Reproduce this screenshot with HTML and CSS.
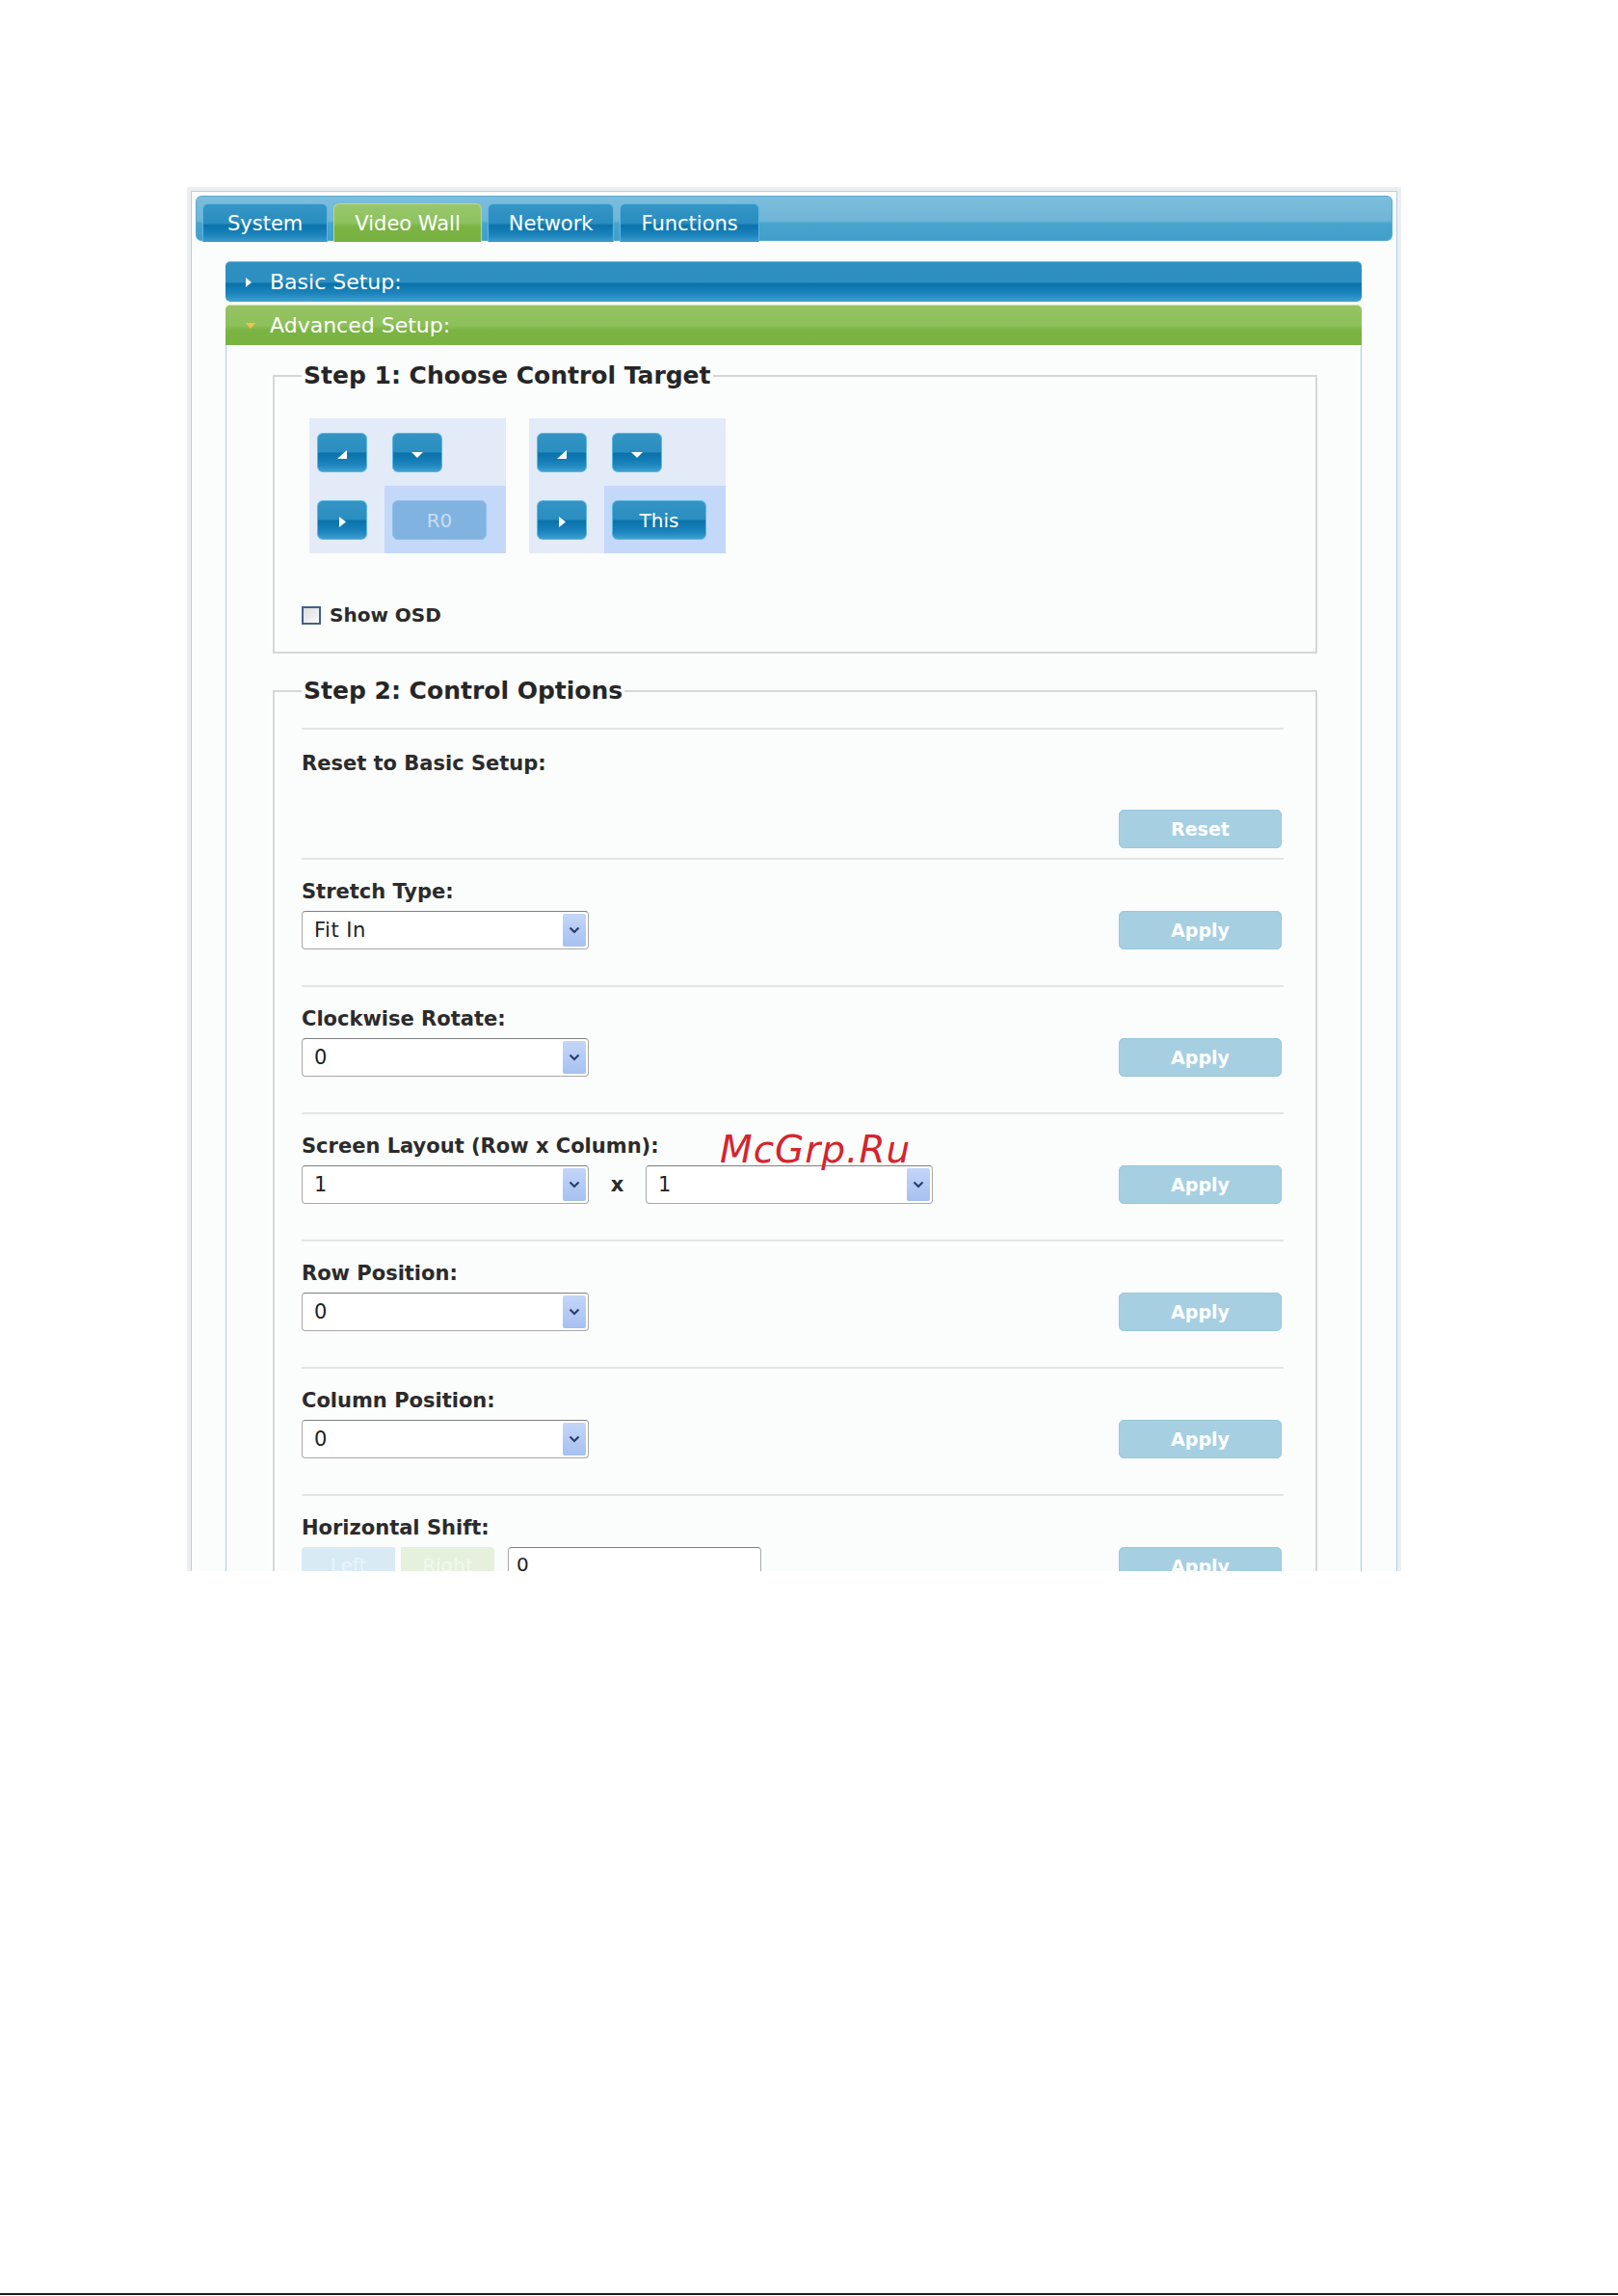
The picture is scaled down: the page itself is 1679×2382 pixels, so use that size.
FILE: index.html
```html
<!DOCTYPE html>
<html lang="en">
<head>
  <meta charset="UTF-8">
  <title>Video Wall</title>
  <link rel="stylesheet" href="styles.css">
</head>
<body>
  <div class="sheet">
    <div class="frame">
      <div class="frame-in">
        <div class="tabbar">
          <span class="tab">System</span>
          <span class="tab active">Video Wall</span>
          <span class="tab">Network</span>
          <span class="tab">Functions</span>
        </div>

        <div class="setup">
          <div class="bar basic"><span class="tri-r"></span>Basic Setup:</div>
          <div class="bar advanced"><span class="tri-d"></span>Advanced Setup:</div>

          <div class="panel">
            <fieldset class="step step1">
              <legend>Step 1: Choose Control Target</legend>
              <div class="targets">
                <div class="target">
                  <div class="cell"><button class="nav"><svg width="10" height="9" viewBox="0 0 10 9"><polygon points="0,9 10,9 10,0" fill="#fff"/></svg></button></div>
                  <div class="cell"><button class="nav"><svg width="12" height="6" viewBox="0 0 12 6"><polygon points="0,0 12,0 6,6" fill="#fff"/></svg></button></div>
                  <div class="cell"><button class="nav"><svg width="7" height="11" viewBox="0 0 7 11"><polygon points="0,0 7,5.5 0,11" fill="#fff"/></svg></button></div>
                  <div class="cell sel"><button class="pick off">R0</button></div>
                </div>
                <div class="target">
                  <div class="cell"><button class="nav"><svg width="10" height="9" viewBox="0 0 10 9"><polygon points="0,9 10,9 10,0" fill="#fff"/></svg></button></div>
                  <div class="cell"><button class="nav"><svg width="12" height="6" viewBox="0 0 12 6"><polygon points="0,0 12,0 6,6" fill="#fff"/></svg></button></div>
                  <div class="cell"><button class="nav"><svg width="7" height="11" viewBox="0 0 7 11"><polygon points="0,0 7,5.5 0,11" fill="#fff"/></svg></button></div>
                  <div class="cell sel"><button class="pick">This</button></div>
                </div>
              </div>
              <label class="osd"><span class="box"></span>Show OSD</label>
            </fieldset>

            <fieldset class="step step2">
              <legend>Step 2: Control Options</legend>

              <div class="opt reset">
                <div class="label">Reset to Basic Setup:</div>
                <div class="ctrl"><span></span><button class="apply">Reset</button></div>
              </div>

              <div class="opt">
                <div class="label">Stretch Type:</div>
                <div class="ctrl">
                  <div class="select"><span>Fit In</span><span class="caret"><svg width="12" height="8" viewBox="0 0 12 8"><polyline points="1.5,1.5 6,6 10.5,1.5" fill="none" stroke="#27406e" stroke-width="2.2"/></svg></span></div>
                  <button class="apply">Apply</button>
                </div>
              </div>

              <div class="opt">
                <div class="label">Clockwise Rotate:</div>
                <div class="ctrl">
                  <div class="select"><span>0</span><span class="caret"><svg width="12" height="8" viewBox="0 0 12 8"><polyline points="1.5,1.5 6,6 10.5,1.5" fill="none" stroke="#27406e" stroke-width="2.2"/></svg></span></div>
                  <button class="apply">Apply</button>
                </div>
              </div>

              <div class="opt">
                <div class="label">Screen Layout (Row x Column):</div>
                <div class="ctrl">
                  <div class="pair">
                    <div class="select"><span>1</span><span class="caret"><svg width="12" height="8" viewBox="0 0 12 8"><polyline points="1.5,1.5 6,6 10.5,1.5" fill="none" stroke="#27406e" stroke-width="2.2"/></svg></span></div>
                    <span class="times">x</span>
                    <div class="select"><span>1</span><span class="caret"><svg width="12" height="8" viewBox="0 0 12 8"><polyline points="1.5,1.5 6,6 10.5,1.5" fill="none" stroke="#27406e" stroke-width="2.2"/></svg></span></div>
                  </div>
                  <button class="apply">Apply</button>
                </div>
              </div>

              <div class="opt">
                <div class="label">Row Position:</div>
                <div class="ctrl">
                  <div class="select"><span>0</span><span class="caret"><svg width="12" height="8" viewBox="0 0 12 8"><polyline points="1.5,1.5 6,6 10.5,1.5" fill="none" stroke="#27406e" stroke-width="2.2"/></svg></span></div>
                  <button class="apply">Apply</button>
                </div>
              </div>

              <div class="opt">
                <div class="label">Column Position:</div>
                <div class="ctrl">
                  <div class="select"><span>0</span><span class="caret"><svg width="12" height="8" viewBox="0 0 12 8"><polyline points="1.5,1.5 6,6 10.5,1.5" fill="none" stroke="#27406e" stroke-width="2.2"/></svg></span></div>
                  <button class="apply">Apply</button>
                </div>
              </div>

              <div class="opt">
                <div class="label">Horizontal Shift:</div>
                <div class="ctrl">
                  <div class="pair">
                    <button class="shift left">Left</button>
                    <button class="shift right">Right</button>
                    <div class="field">0</div>
                  </div>
                  <button class="apply">Apply</button>
                </div>
              </div>
            </fieldset>
          </div>
        </div>
      </div>
    </div>
    <div class="watermark">McGrp.Ru</div>
  </div>
  <div class="edge"></div>
</body>
</html>
```

FILE: styles.css
```css
body {
  margin: 0;
  background: #fff;
  font-family: "DejaVu Sans", "Liberation Sans", sans-serif;
  color: #2b2b2b;
}
.sheet {
  position: relative;
  height: 2379px;
  padding: 194px 0 0 194px;
  box-sizing: border-box;
}
.edge {
  height: 2px;
  background: #1c1c1c;
}

/* outer frame, cut off at the bottom like the screenshot */
.frame {
  width: 1260px;
  height: 1436px;
  box-sizing: border-box;
  border: 4px solid #eceeef;
  border-bottom: 0;
  overflow: hidden;
}
.frame-in {
  height: 100%;
  box-sizing: border-box;
  border: 1px solid #b3d1ea;
  border-bottom: 0;
  background: #fbfcfc;
  padding: 4px 4px 0;
}

.tabbar {
  display: flex;
  gap: 6px;
  height: 47px;
  box-sizing: border-box;
  padding: 7px 0 0 6px;
  border-radius: 6px;
  background: linear-gradient(to bottom, #7cbddb 0%, #70b6d7 55%, #48a4cd 62%, #409fca 100%);
  border: 1px solid #5aaad3;
}
.tab {
  height: 40px;
  box-sizing: border-box;
  padding: 0 21px;
  display: flex;
  align-items: center;
  color: #fff;
  font-size: 21px;
  border: 1px solid #5bb7e4;
  border-bottom: 0;
  border-radius: 6px 6px 0 0;
  background: linear-gradient(to bottom, #3595c5 0%, #2a8dc0 50%, #0b73ac 56%, #1b83bb 80%, #3b9dcd 100%);
}
.tab:first-child {
  padding: 0 25px;
}
.tab.active {
  border-color: #b6dc8c;
  background: linear-gradient(to bottom, #98c76b 0%, #8dc15e 50%, #7bb444 58%, #78b140 100%);
}

.setup {
  margin: 21px 32px 0 31px;
}
.bar {
  height: 42px;
  box-sizing: border-box;
  display: flex;
  align-items: center;
  padding-left: 21px;
  color: #fff;
  font-size: 22px;
}
.bar.basic {
  border-radius: 5px;
  border-top: 1px solid #5cbbea;
  background: linear-gradient(to bottom, #2f90c0 0%, #2d8fbf 50%, #0a72ab 54%, #1d85bc 80%, #40a2d1 100%);
}
.bar.advanced {
  margin-top: 3px;
  border-radius: 5px 5px 0 0;
  border-top: 1px solid #c7e69e;
  background: linear-gradient(to bottom, #95c463 0%, #8dc05b 50%, #7cb443 62%, #7ab241 100%);
}
.tri-r {
  width: 0;
  height: 0;
  border-top: 5px solid transparent;
  border-bottom: 5px solid transparent;
  border-left: 6px solid #fff;
  margin-right: 19px;
}
.tri-d {
  width: 0;
  height: 0;
  border-left: 5px solid transparent;
  border-right: 5px solid transparent;
  border-top: 6px solid #f4c24c;
  margin-right: 15px;
}

.panel {
  border-left: 1px solid #a9cde8;
  border-right: 1px solid #a9cde8;
  background: #fbfcfc;
  padding-top: 17px;
  height: 1400px;
}

.step {
  margin: 0 45px 24px 48px;
  padding: 0 33px 26px 28px;
  border: 2px solid #d6d6d6;
}
.step legend {
  padding: 0 2px;
  font-size: 25px;
  line-height: 30px;
  font-weight: bold;
  color: #262626;
}

.targets {
  display: flex;
  gap: 24px;
  margin: 29px 0 0 8px;
}
.target {
  display: grid;
  grid-template-columns: 78px 126px;
  grid-template-rows: 70px 70px;
  background: #e3eaf8;
}
.cell {
  padding: 15px 0 0 8px;
}
.cell.sel {
  background: #c4d8f9;
}
.nav, .pick {
  height: 41px;
  box-sizing: border-box;
  border: 1px solid #5ab8e6;
  border-radius: 6px;
  background: linear-gradient(to bottom, #3394c4 0%, #2b8ec0 48%, #0a72ab 52%, #1a83bb 80%, #3d9fcf 100%);
  color: #fff;
  font-family: inherit;
  font-size: 20px;
  padding: 0;
  display: flex;
  align-items: center;
  justify-content: center;
}
.nav {
  width: 52px;
}
.nav svg {
  margin-top: 4px;
}
.pick {
  width: 98px;
}
.pick.off {
  background: #80b3df;
  border-color: #8fbde5;
  color: #c9dcf4;
}

.osd {
  display: flex;
  align-items: center;
  gap: 9px;
  height: 24px;
  margin-top: 52px;
  font-size: 20px;
  font-weight: bold;
  color: #2b2b2b;
}
.osd .box {
  width: 20px;
  height: 19px;
  box-sizing: border-box;
  border: 2px solid #40618d;
  background: linear-gradient(135deg, #dcdcdc, #fafafa);
}

.step2 legend + .opt {
  margin-top: 23px;
}
.opt {
  border-top: 2px solid #e4e4e4;
  padding: 21px 0 37px;
}
.opt.reset {
  padding: 23px 0 10px;
}
.label {
  font-size: 21px;
  line-height: 24px;
  font-weight: bold;
  color: #2b2b2b;
}
.ctrl {
  display: flex;
  justify-content: space-between;
  align-items: center;
  margin-top: 8px;
}
.reset .ctrl {
  margin-top: 36px;
}
.pair {
  display: flex;
  align-items: center;
}
.select {
  width: 298px;
  height: 40px;
  box-sizing: border-box;
  border: 1px solid #a8a8a8;
  border-top-color: #7f7f7f;
  border-radius: 4px;
  background: #fff;
  display: flex;
  align-items: center;
  padding-left: 12px;
  font-size: 21px;
  letter-spacing: 0.5px;
  color: #222;
}
.caret {
  margin-left: auto;
  margin-right: 2px;
  width: 24px;
  height: 34px;
  border-radius: 2px;
  background: linear-gradient(to bottom, #c4d6f8, #a6c0f0);
  display: flex;
  align-items: center;
  justify-content: center;
}
.times {
  width: 59px;
  text-align: center;
  font-size: 21px;
  font-weight: bold;
}
.apply {
  width: 169px;
  height: 40px;
  margin-right: 2px;
  border: 1px solid #9ac6db;
  border-radius: 5px;
  background: #a6cfe2;
  color: #fff;
  font-family: inherit;
  font-size: 19px;
  font-weight: bold;
}
.shift {
  width: 97px;
  height: 40px;
  border: 0;
  border-radius: 4px 0 0 4px;
  font-family: inherit;
  font-size: 20px;
  padding-bottom: 4px;
}
.shift.left {
  background: #d8ebf5;
  color: #e9f4fa;
}
.shift.right {
  margin-left: 6px;
  border-radius: 0 4px 4px 0;
  background: #e5f1dc;
  color: #f2f8ee;
}
.field {
  width: 263px;
  height: 40px;
  box-sizing: border-box;
  margin-left: 14px;
  border: 1px solid #a8a8a8;
  border-top-color: #7f7f7f;
  border-radius: 4px;
  background: #fff;
  padding: 5px 8px 0;
  font-size: 20px;
  color: #222;
}

.watermark {
  position: absolute;
  left: 747px;
  top: 1170px;
  font-size: 39px;
  font-style: italic;
  letter-spacing: 1px;
  color: #d4252d;
}
```
